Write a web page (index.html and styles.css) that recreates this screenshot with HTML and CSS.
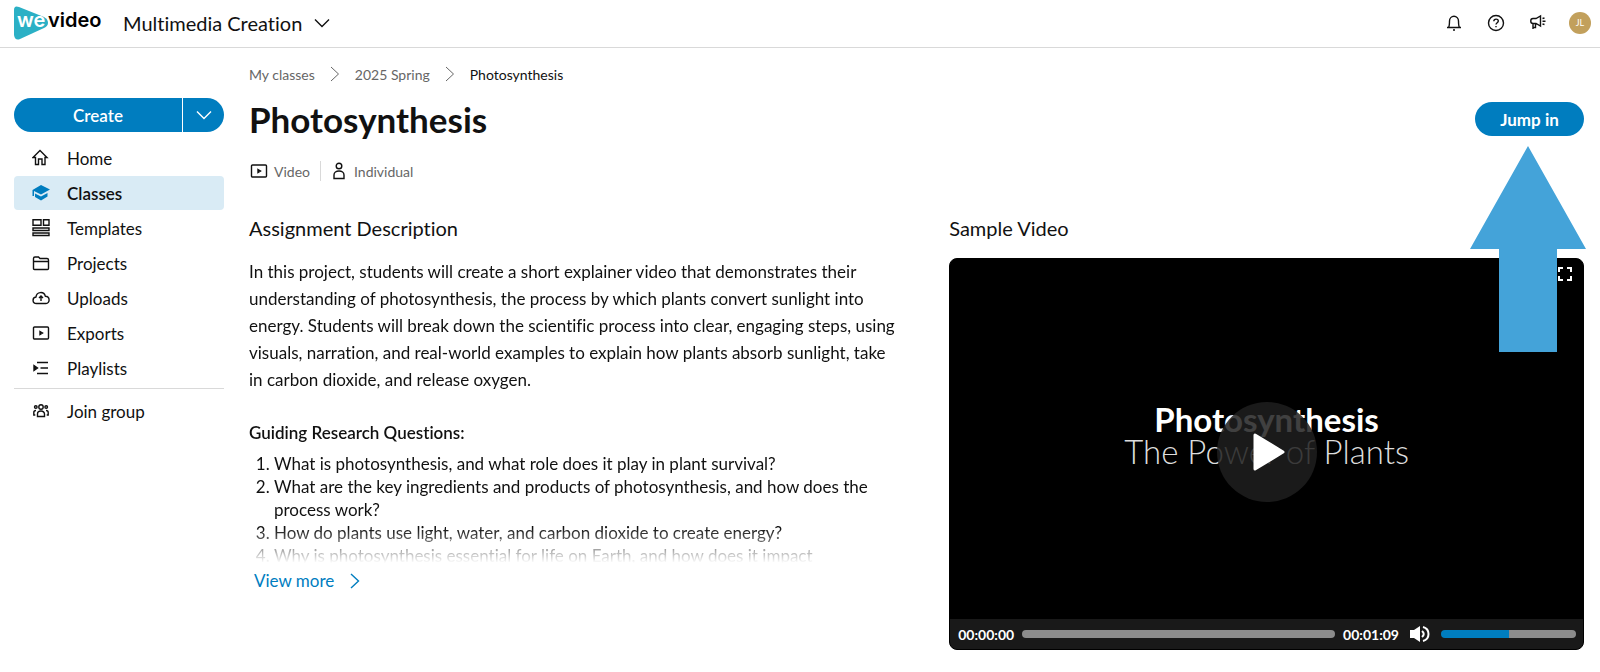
FILE: index.html
```
<!DOCTYPE html>
<html lang="en">
<head>
    <meta charset="UTF-8">
    <meta name="viewport" content="width=device-width, initial-scale=1.0">
    <title>Photosynthesis - WeVideo</title>
    <link rel="stylesheet" href="styles.css">
</head>
<body>
    <header class="topbar">
        <a href="#" class="logo" aria-label="WeVideo">
            <svg width="88" height="34" viewBox="0 0 88 34">
                <path d="M0 4 Q0 -1 5 1 L30 11 Q34 13 34 17 Q34 20 30 22 L6 33 Q1 35 0 29 Z" fill="#2bb0c5"/>
                <text x="3" y="21" class="logo-we">we</text>
                <text x="34" y="21" class="logo-video">video</text>
            </svg>
        </a>
        <button class="product">
            Multimedia Creation
            <svg class="icon" width="16" height="10" viewBox="0 0 16 10"><path d="M1 1.5 8 8.5 15 1.5"/></svg>
        </button>
        <div class="tools">
            <button class="tool" aria-label="Notifications">
                <svg class="icon" width="16" height="18" viewBox="0 0 16 18"><path d="M1 13.5h14M2.500 13.500C3.500 12 3.500 10.500 3.500 7a4.500 4.800 0 0 1 9 0c0 3.500 0 5 1 6.500M7 16h2"/></svg>
            </button>
            <button class="tool" aria-label="Help">
                <svg class="icon" width="18" height="18" viewBox="0 0 18 18"><circle cx="9" cy="9" r="7.500"/><path d="M6.800 7.300c0-1.400 1-2.200 2.300-2.200 1.200 0 2.200.8 2.200 2 0 1.700-2.300 1.700-2.300 3.500M9 12v1.300"/></svg>
            </button>
            <button class="tool" aria-label="What's new">
                <svg class="icon" width="18" height="18" viewBox="0 0 18 18"><path d="M4 4.500h3l4.500-2.500v10L7 9.500H4v5.500M4 4.500c-3 0-3 5 0 5M6.500 9.500v4H4M13.500 4.500l2-.5M13.500 7.200h3M13.500 10l2 .5"/></svg>
            </button>
            <button class="avatar">JL</button>
        </div>
    </header>

    <div class="layout">
        <aside class="sidebar">
            <div class="create">
                <button class="create-main">Create</button>
                <button class="create-more" aria-label="More create options">
                    <svg class="icon" width="16" height="10" viewBox="0 0 16 10"><path d="M1 1.500 8 8.500 15 1.500"/></svg>
                </button>
            </div>
            <nav class="nav">
                <a href="#" class="nav-item">
                    <svg class="icon" width="18" height="18" viewBox="0 0 18 18"><path d="M1 8.500 8 1.500 15 8.500H13V15.500H10V10H6.500V15.500H3.500V8.500Z"/></svg>
                    Home
                </a>
                <a href="#" class="nav-item active">
                    <svg width="18" height="18" viewBox="0 0 18 18" fill="#007dbf"><path d="M9 1 18 5.500 9 10.500 2 7V12H.5V6Z"/><path d="M3 9.500 9 12.500 15.500 9V12.500L9 16.500 3 13Z"/></svg>
                    Classes
                </a>
                <a href="#" class="nav-item">
                    <svg class="icon" width="18" height="18" viewBox="0 0 18 18"><path d="M1 .8h8v5.400H1zM11.500 .8h5.500v5.400H11.500zM1 9h16v2.500H1zM1 14h16v2.500H1z"/></svg>
                    Templates
                </a>
                <a href="#" class="nav-item">
                    <svg class="icon" width="18" height="18" viewBox="0 0 18 18"><path d="M1.500 14.500V4.500Q1.500 3 3 3H6.500L8 4.500H15Q16.500 4.500 16.500 6V14.500Q16.500 15.500 15.500 15.500H2.500Q1.500 15.500 1.500 14.500ZM1.500 7.500H16.500"/></svg>
                    Projects
                </a>
                <a href="#" class="nav-item">
                    <svg class="icon" width="18" height="18" viewBox="0 0 18 18"><path d="M4.500 14.500C0 14.500 0 8.500 4 8 4.500 2.500 12 2 13.300 7.200 18.500 7.500 18 14.500 14 14.500ZM9 12V7M7 9 9 7 11 9"/></svg>
                    Uploads
                </a>
                <a href="#" class="nav-item">
                    <svg class="icon" width="18" height="18" viewBox="0 0 18 18"><rect x="1.500" y="3" width="15" height="12" rx="1"/><path d="M8 7.500 10.500 9 8 10.500Z" fill="#111"/></svg>
                    Exports
                </a>
                <a href="#" class="nav-item">
                    <svg class="icon" width="18" height="18" viewBox="0 0 18 18"><path d="M5 3.500H16M8.500 9H16M5 14.500H16"/><path d="M2 6.500 5.500 9 2 11.500Z" fill="#111"/></svg>
                    Playlists
                </a>
            </nav>
            <nav class="nav nav-bottom">
                <a href="#" class="nav-item">
                    <svg class="icon" width="18" height="18" viewBox="0 0 18 18"><circle cx="9" cy="5" r="2.200"/><circle cx="3.800" cy="5" r="1.300"/><circle cx="14.200" cy="5" r="1.300"/><path d="M5.500 14.500V12a3.500 3 0 0 1 7 0v2.500ZM3.300 13H1.800V10.500Q1.800 8.500 4 8.500M14.700 13h1.500V10.500Q16.200 8.500 14 8.500"/></svg>
                    Join group
                </a>
            </nav>
        </aside>

        <main class="content">
            <nav class="breadcrumb" aria-label="Breadcrumb">
                <a href="#">My classes</a>
                <svg class="icon" width="10" height="16" viewBox="0 0 10 16"><path d="M1 1 8.500 8 1 15"/></svg>
                <a href="#">2025 Spring</a>
                <svg class="icon" width="10" height="16" viewBox="0 0 10 16"><path d="M1 1 8.500 8 1 15"/></svg>
                <span class="current">Photosynthesis</span>
            </nav>

            <div class="title-row">
                <h1>Photosynthesis</h1>
                <div class="jump">
                    <button class="jump-btn">Jump in</button>
                    <!-- callout arrow pointing at the button -->
                    <svg class="arrow" width="116" height="206" viewBox="0 0 116 206"><path d="M58 0 116 103H87V206H29V103H0Z" fill="#44a3d9"/></svg>
                </div>
            </div>

            <div class="meta">
                <span class="meta-item">
                    <svg class="icon" width="18" height="18" viewBox="0 0 18 18"><rect x="1.500" y="3" width="15" height="12" rx="1"/><path d="M8 7.500 10.500 9 8 10.500Z" fill="#111"/></svg>
                    Video
                </span>
                <span class="meta-item">
                    <svg class="icon" width="18" height="18" viewBox="0 0 18 18"><circle cx="9" cy="4" r="2.800"/><path d="M4 16.500V13a5 4 0 0 1 10 0v3.500Z"/></svg>
                    Individual
                </span>
            </div>

            <div class="columns">
                <section class="description">
                    <h2>Assignment Description</h2>
                    <div class="description-body">
                        <p>In this project, students will create a short explainer video that demonstrates their understanding of photosynthesis, the process by which plants convert sunlight into energy. Students will break down the scientific process into clear, engaging steps, using visuals, narration, and real-world examples to explain how plants absorb sunlight, take in carbon dioxide, and release oxygen.</p>
                        <h3>Guiding Research Questions:</h3>
                        <ol>
                            <li>What is photosynthesis, and what role does it play in plant survival?</li>
                            <li>What are the key ingredients and products of photosynthesis, and how does the process work?</li>
                            <li>How do plants use light, water, and carbon dioxide to create energy?</li>
                            <li>Why is photosynthesis essential for life on Earth, and how does it impact</li>
                        </ol>
                    </div>
                    <a href="#" class="view-more">
                        View more
                        <svg class="icon" width="10" height="16" viewBox="0 0 10 16"><path d="M1 1 8.500 8 1 15"/></svg>
                    </a>
                </section>

                <section class="sample">
                    <h2>Sample Video</h2>
                    <div class="player">
                        <div class="screen">
                            <div class="video-title">
                                <strong>Photosynthesis</strong>
                                <span>The Power of Plants</span>
                            </div>
                            <button class="play" aria-label="Play">
                                <svg width="32" height="38" viewBox="0 0 32 38"><path d="M2 2V36L30 19Z" fill="#fff" stroke="#fff" stroke-width="3" stroke-linejoin="round"/></svg>
                            </button>
                            <button class="fullscreen" aria-label="Full screen">
                                <svg width="14" height="14" viewBox="0 0 14 14" fill="none" stroke="#fff" stroke-width="2"><path d="M1 5V1H5M9 1H13V5M13 9V13H9M5 13H1V9"/></svg>
                            </button>
                        </div>
                        <div class="controls">
                            <span class="time">00:00:00</span>
                            <input type="range" class="bar progress" min="0" max="69" value="0" aria-label="Seek">
                            <span class="time">00:01:09</span>
                            <button class="mute" aria-label="Mute">
                                <svg width="20" height="18" viewBox="0 0 20 18"><path d="M0 5H4L10 1V17L4 13H0Z" fill="#fff"/><path d="M12 6Q15.500 9 12 12M13 2Q18.500 3.500 18.500 9T13 16" fill="none" stroke="#fff" stroke-width="2"/></svg>
                            </button>
                            <input type="range" class="bar volume" min="0" max="100" value="50" aria-label="Volume">
                        </div>
                    </div>
                </section>
            </div>
        </main>
    </div>
</body>
</html>
```
FILE: styles.css
```
* {
    box-sizing: border-box;
}
body {
    margin: 0;
    font-family: Lato, sans-serif;
    font-size: 17px;
    font-variant-ligatures: none;
    color: #111;
    background: #fff;
}
a {
    color: inherit;
    text-decoration: none;
}
button {
    font: inherit;
    font-variant-ligatures: none;
    color: inherit;
    background: none;
    border: none;
    padding: 0;
    cursor: pointer;
}
h1, h2, h3, p, ol {
    margin: 0;
}
svg {
    display: block;
    flex-shrink: 0;
}
.icon {
    fill: none;
    stroke: currentColor;
    stroke-width: 1.4;
}

/* Top bar */
.topbar {
    display: flex;
    align-items: center;
    height: 48px;
    padding: 0 9px 2px 14px;
    border-bottom: 1px solid #d9d9d9;
}
.logo-we, .logo-video {
    font-family: Inter, sans-serif;
    font-size: 20px;
    font-weight: 600;
}
.logo-we {
    fill: #fff;
}
.product {
    display: flex;
    align-items: center;
    gap: 12px;
    margin-left: 21px;
    font-size: 20px;
}
.tools {
    display: flex;
    align-items: center;
    gap: 24px;
    margin-left: auto;
}
.tool {
    display: flex;
    justify-content: center;
    width: 18px;
}
.avatar {
    width: 22px;
    height: 22px;
    margin-left: -2px;
    border-radius: 50%;
    background: #c2a05c;
    color: #fff;
    font-size: 9px;
}

/* Sidebar */
.layout {
    display: flex;
    gap: 25px;
    padding: 0 16px 0 14px;
}
.sidebar {
    flex: 0 0 210px;
    padding-top: 50px;
}
.create {
    display: flex;
    gap: 1px;
    height: 34px;
    margin-bottom: 9px;
    color: #fff;
    font-weight: 600;
}
.create-main {
    flex: 1;
    background: #007dbf;
    border-radius: 17px 0 0 17px;
}
.create-more {
    display: flex;
    align-items: center;
    justify-content: center;
    width: 41px;
    background: #007dbf;
    border-radius: 0 17px 17px 0;
}
.nav {
    display: flex;
    flex-direction: column;
    gap: 1px;
}
.nav-item {
    display: flex;
    align-items: center;
    gap: 17px;
    height: 34px;
    padding-left: 18px;
    border-radius: 4px;
}
.nav-item.active {
    background: #d9ebf5;
    font-weight: 600;
}
.nav-bottom {
    margin-top: 3px;
    padding-top: 5px;
    border-top: 1px solid #d9d9d9;
}

/* Page head */
.content {
    flex: 1;
    min-width: 0;
    padding-top: 17px;
}
.breadcrumb {
    display: flex;
    align-items: center;
    gap: 15px;
    height: 18px;
    color: #666;
    font-size: 14px;
}
.breadcrumb .icon {
    stroke-width: 1;
}
.current {
    color: #111;
}
.title-row {
    display: flex;
    align-items: center;
    justify-content: space-between;
    height: 34px;
    margin-top: 19px;
}
h1 {
    font-size: 35px;
    line-height: 34px;
    font-weight: 700;
}
.jump {
    position: relative;
}
.jump-btn {
    width: 109px;
    height: 34px;
    border-radius: 17px;
    background: #007dbf;
    color: #fff;
    font-weight: 700;
}
.arrow {
    position: absolute;
    top: 44px;
    right: -2px;
    z-index: 2;
}
.meta {
    display: flex;
    align-items: center;
    margin-top: 25px;
    color: #666;
    font-size: 14px;
}
.meta-item {
    display: flex;
    align-items: center;
    gap: 6px;
    height: 20px;
    padding-left: 1px;
}
.meta-item + .meta-item {
    margin-left: 10px;
    padding-left: 9px;
    border-left: 1px solid #d9d9d9;
}
.meta .icon {
    color: #111;
}

/* Columns */
.columns {
    display: grid;
    grid-template-columns: 20fr 19fr;
    gap: 32px;
    margin-top: 34px;
}
h2 {
    font-size: 20px;
    line-height: 26px;
    font-weight: 400;
}
.description-body {
    max-height: 305px;
    margin-top: 17px;
    padding-right: 16px;
    overflow: hidden;
    -webkit-mask-image: linear-gradient(#000 270px, transparent 305px);
    mask-image: linear-gradient(#000 270px, transparent 305px);
}
.description-body p {
    line-height: 27px;
}
h3 {
    margin: 26px 0 6px;
    font-size: 17px;
    line-height: 27px;
    font-weight: 600;
}
ol {
    padding-left: 25px;
    line-height: 23px;
}
.view-more {
    display: inline-flex;
    align-items: center;
    gap: 16px;
    margin: 7px 0 0 5px;
    color: #007dbf;
}

/* Player */
.player {
    margin-top: 17px;
    border: 1px solid #000;
    border-radius: 8px;
    background: #000;
    overflow: hidden;
}
.screen {
    position: relative;
    display: flex;
    align-items: center;
    justify-content: center;
    height: 360px;
    padding-bottom: 8px;
}
.video-title {
    display: flex;
    flex-direction: column;
    align-items: center;
    color: #fff;
    font-size: 33px;
    line-height: 32px;
}
.video-title span {
    color: #ddd;
    font-weight: 300;
}
.play {
    position: absolute;
    top: 143px;
    left: calc(50% - 50px);
    display: flex;
    align-items: center;
    justify-content: center;
    width: 100px;
    height: 100px;
    padding-left: 4px;
    border-radius: 50%;
    background: rgba(30, 30, 30, 0.85);
}
.fullscreen {
    position: absolute;
    top: 8px;
    right: 11px;
}
.controls {
    display: flex;
    align-items: center;
    height: 30px;
    padding: 0 7px 0 8px;
    gap: 8px;
    background: #191919;
    color: #fff;
}
.time {
    font-size: 14px;
    font-weight: 700;
}
.mute {
    margin: 0 3px;
}
.bar {
    appearance: none;
    height: 8px;
    min-width: 0;
    margin: 0;
    border-radius: 4px;
    background: #8c8c8c;
}
.bar::-webkit-slider-thumb {
    appearance: none;
    width: 0;
    height: 0;
}
.progress {
    flex: 1;
}
.volume {
    width: 135px;
    background: linear-gradient(to right, #007dbf 50%, #8c8c8c 50%);
}
```
